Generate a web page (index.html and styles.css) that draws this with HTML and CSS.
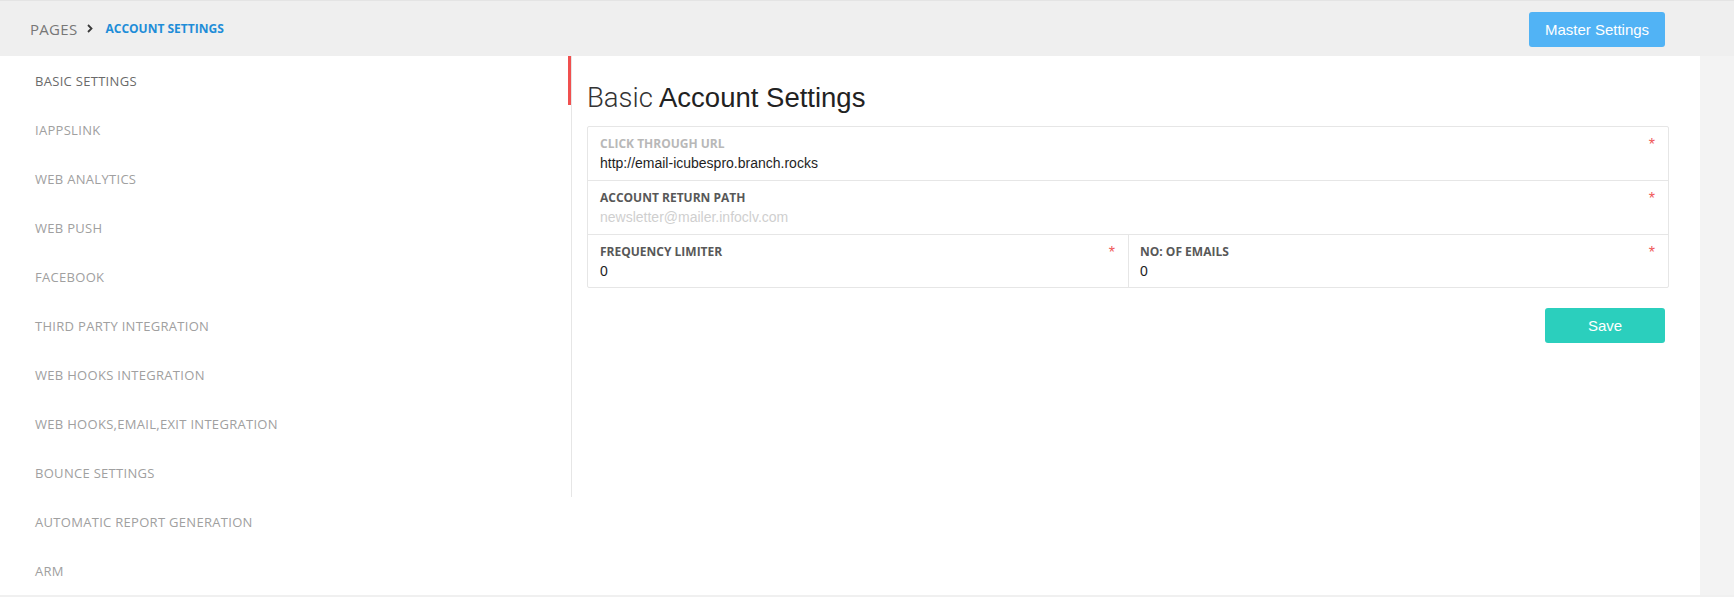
FILE: index.html
```html
<!DOCTYPE html>
<html>
<head>
<meta charset="utf-8">
<link rel="stylesheet" href="styles.css">
</head>
<body>
<div class="page">
  <header class="topbar">
    <nav class="crumbs">
      <span class="crumb-root">PAGES</span>
      <svg class="crumb-sep" width="6" height="9" viewBox="0 0 6 9"><path d="M1 1 L4.5 4.5 L1 8" fill="none" stroke="#3a3a3a" stroke-width="1.8"/></svg>
      <span class="crumb-current">ACCOUNT SETTINGS</span>
    </nav>
    <button class="btn btn-master">Master Settings</button>
  </header>
  <div class="body-row">
    <main class="panel">
      <aside class="sidebar">
        <a class="side-item active">BASIC SETTINGS</a>
        <a class="side-item">IAPPSLINK</a>
        <a class="side-item">WEB ANALYTICS</a>
        <a class="side-item">WEB PUSH</a>
        <a class="side-item">FACEBOOK</a>
        <a class="side-item">THIRD PARTY INTEGRATION</a>
        <a class="side-item">WEB HOOKS INTEGRATION</a>
        <a class="side-item">WEB HOOKS,EMAIL,EXIT INTEGRATION</a>
        <a class="side-item">BOUNCE SETTINGS</a>
        <a class="side-item">AUTOMATIC REPORT GENERATION</a>
        <a class="side-item">ARM</a>
      </aside>
      <section class="content">
        <h1 class="title"><span class="light">Basic</span> Account Settings</h1>
        <div class="form-box">
          <div class="form-row">
            <div class="field">
              <div class="field-head"><span class="label label-muted">CLICK THROUGH URL</span><span class="req">*</span></div>
              <div class="value">http://email-icubespro.branch.rocks</div>
            </div>
          </div>
          <div class="form-row">
            <div class="field">
              <div class="field-head"><span class="label">ACCOUNT RETURN PATH</span><span class="req">*</span></div>
              <div class="value placeholder">newsletter@mailer.infoclv.com</div>
            </div>
          </div>
          <div class="form-row split">
            <div class="field">
              <div class="field-head"><span class="label">FREQUENCY LIMITER</span><span class="req">*</span></div>
              <div class="value">0</div>
            </div>
            <div class="field">
              <div class="field-head"><span class="label">NO: OF EMAILS</span><span class="req">*</span></div>
              <div class="value">0</div>
            </div>
          </div>
        </div>
        <div class="actions">
          <button class="btn btn-save">Save</button>
        </div>
      </section>
    </main>
    <div class="gutter"></div>
  </div>
</div>
</body>
</html>
```
FILE: styles.css
```css
* { box-sizing: border-box; }
html, body { margin: 0; padding: 0; }
body {
  background: #f0f0f0;
  font-family: "Liberation Sans", Arial, sans-serif;
  width: 1734px;
  height: 597px;
  overflow: hidden;
}
.page { display: flex; flex-direction: column; height: 597px; }
.topbar {
  height: 56px;
  background: #efefef;
  border-top: 1px solid #e4e4e4;
  display: flex;
  align-items: center;
  justify-content: space-between;
  padding: 0 69px 0 30px;
}
.crumbs { display: flex; align-items: center; }
.crumb-root {
  font-family: "Open Sans", sans-serif;
  font-size: 15px;
  color: #777;
  letter-spacing: 0.3px;
}
.crumb-sep { margin: 0 12px 0 10px; }
.crumb-current {
  font-family: "Open Sans", sans-serif;
  font-weight: 700;
  font-size: 12px;
  color: #1e8dd8;
  letter-spacing: 0;
}
.btn {
  border: none;
  border-radius: 3px;
  color: #fff;
  font-family: "Liberation Sans", Arial, sans-serif;
  font-size: 15px;
  cursor: pointer;
}
.btn-master {
  width: 136px;
  height: 35px;
  background: #51b3f5;
  margin-top: 2px;
}
.body-row { display: flex; flex: 0 0 539px; }
.panel {
  width: 1700px;
  height: 539px;
  background: #fff;
  display: flex;
  align-items: flex-start;
}
.gutter { flex: 1; background: #f3f3f3; }
.sidebar { width: 571px; display: flex; flex-direction: column; }
.side-item {
  height: 49px;
  display: flex;
  align-items: center;
  padding-left: 35px;
  font-family: "Open Sans", sans-serif;
  font-size: 13px;
  color: #a0a0a0;
  letter-spacing: 0.3px;
  border-right: 3px solid transparent;
}
.side-item.active { color: #6a6a6a; border-right-color: #f0504f; }
.content {
  flex: 1;
  height: 441px;
  border-left: 1px solid #e6e6e6;
  padding: 26px 31px 0 15px;
}
.title {
  margin: 0;
  font-family: "Liberation Sans", Arial, sans-serif;
  font-weight: 400;
  font-size: 27.5px;
  line-height: 32px;
  color: #222;
}
.title .light { font-family: Roboto, "Liberation Sans", sans-serif; font-weight: 300; color: #333; }
.form-box {
  margin-top: 12px;
  border: 1px solid #e6e6e6;
  border-radius: 2px;
}
.form-row { display: flex; border-bottom: 1px solid #e6e6e6; }
.form-row:last-child { border-bottom: none; }
.field { flex: 1; padding: 9px 13px 8px 12px; }
.split .field { padding-bottom: 7px; }
.split .field + .field { border-left: 1px solid #e6e6e6; padding-left: 11px; }
.field-head { display: flex; justify-content: space-between; align-items: flex-start; height: 15px; }
.label {
  font-family: "Open Sans", sans-serif;
  font-weight: 700;
  font-size: 12px;
  line-height: 15px;
  color: #585858;
}
.label-muted { color: #b8b8b8; }
.req { color: #f05a5a; font-size: 16px; line-height: 17px; margin-top: 0; }
.value {
  margin-top: 3px;
  font-size: 14px;
  line-height: 18px;
  color: #1e1e1e;
}
.value.placeholder { color: #cfcfcf; }
.actions { display: flex; justify-content: flex-end; margin-top: 20px; padding-right: 4px; }
.btn-save {
  width: 120px;
  height: 35px;
  background: #2bcfbd;
}
```
